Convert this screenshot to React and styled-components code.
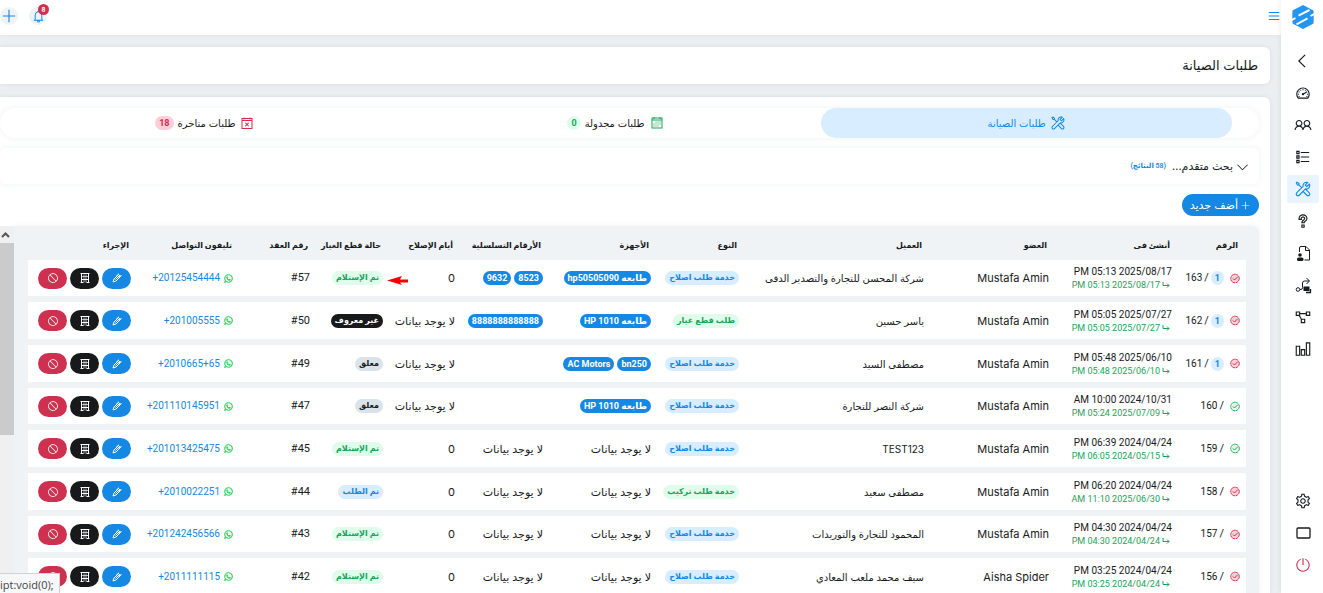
import React from "react";
import styled, { createGlobalStyle, css } from "styled-components";
import {
  LiaAngleLeftSolid, LiaAngleDownSolid, LiaTachometerAltSolid, LiaUserFriendsSolid, LiaListSolid,
  LiaToolsSolid, LiaQuestionSolid, LiaProjectDiagramSolid, LiaChartBarSolid, LiaCogSolid,
  LiaPowerOffSolid, LiaBell, LiaPlusSolid, LiaBarsSolid, LiaBanSolid,
  LiaWhatsapp, LiaCalendarAltSolid, LiaCalendarTimesSolid,
} from "react-icons/lia";

const c = {
  blue: "#1488e3", blueSoft: "#d8edff", green: "#1ba35a", greenSoft: "#e0fdec",
  red: "#ce304f", redSoft: "#ffcdd8", ink: "#17191b", page: "#ebeff2", table: "#eff3f6", grey: "#dbe3ea",
};

const numeric = `Roboto, "DejaVu Sans", sans-serif`;

const GlobalStyle = createGlobalStyle`
  * { box-sizing: border-box; }
  body { margin: 0; background: ${c.page}; color: ${c.ink}; font: 11px/16px Inter, "DejaVu Sans", sans-serif; }
  button { font: inherit; border: 0; padding: 0; cursor: pointer; }
  a { text-decoration: none; }
  svg { display: block; flex: none; }
`;

const Shell = styled.div`
  display: flex;
  height: 100vh;
  overflow: hidden;
`;

const Sidebar = styled.nav`
  flex: 0 0 42px;
  display: flex;
  flex-direction: column;
  align-items: center;
  gap: 4px;
  padding: 4px 0 14px 2px;
  background: #fff;
  box-shadow: 0 0 6px rgba(40, 60, 80, 0.1);
  z-index: 1;
`;

const Logo = styled.a`
  height: 39px;
`;

const SideLink = styled.a`
  display: grid;
  place-items: center;
  width: 32px;
  height: 28px;
  border-radius: 2px;
  font-size: 18px;
  color: ${(p) => (p.$danger ? c.red : p.$active ? c.blue : c.ink)};
  background: ${(p) => (p.$active ? "#e9f4fe" : "transparent")};
`;

const SideSpacer = styled.div`
  flex: 1;
`;

const Main = styled.main`
  flex: 1;
  min-width: 0;
  display: flex;
  flex-direction: column;
`;

const TopBar = styled.header`
  flex: none;
  display: flex;
  align-items: center;
  gap: 11px;
  height: 35px;
  padding: 0 0 3px 0;
  background: #fff;
  box-shadow: 0 0 4px rgba(40, 60, 80, 0.08);
`;

const MenuButton = styled.button`
  margin-inline-end: auto;
  background: none;
  color: ${c.blue};
  font-size: 14px;
`;

const RoundButton = styled.button`
  position: relative;
  display: grid;
  place-items: center;
  width: 18px;
  height: 18px;
  border-radius: 50%;
  background: ${c.table};
  color: ${c.blue};
  font-size: 15px;
`;

const Counter = styled.span`
  position: absolute;
  top: -3px;
  right: -2px;
  width: 11px;
  height: 11px;
  border-radius: 50%;
  background: ${c.red};
  color: #fff;
  font-size: 6px;
  line-height: 11px;
  font-weight: 700;
`;

const Body = styled.div`
  flex: 1;
  min-height: 0;
  display: flex;
  flex-direction: column;
  gap: 13px;
  padding: 12px 11px 0 0;
`;

const panel = css`
  background: #fff;
  border-radius: 0 6px 6px 0;
  box-shadow: 0 0 4px rgba(40, 60, 80, 0.1);
`;

const TitleCard = styled.section`
  ${panel}
  flex: none;
  height: 37px;
  padding: 0 12px;
`;

const Title = styled.h1`
  margin: 0;
  font-size: 13px;
  line-height: 37px;
  font-weight: 400;
`;

const Content = styled.section`
  ${panel}
  border-radius: 0 6px 0 0;
  flex: 1;
  min-height: 0;
  display: flex;
  flex-direction: column;
  gap: 10px;
  padding: 11px 11px 0 0;
`;

const Tabs = styled.div`
  flex: none;
  display: flex;
  height: 30px;
  padding-inline-start: 27px;
  border-radius: 15px;
  box-shadow: 0 0 6px rgba(40, 60, 80, 0.08);
`;

const Tab = styled.button`
  flex: 1;
  display: flex;
  align-items: center;
  justify-content: center;
  gap: 4px;
  border-radius: 15px;
  font-size: 10px;
  background: ${(p) => (p.$active ? c.blueSoft : "transparent")};
  color: ${(p) => (p.$active ? c.blue : c.ink)};
`;

const TabIcon = styled.span`
  font-size: 16px;
  color: ${(p) => p.$color};
`;

const Search = styled.button`
  flex: none;
  display: flex;
  align-items: center;
  gap: 3px;
  height: 36px;
  padding: 0 10px;
  border-radius: 6px;
  background: #fff;
  color: ${c.ink};
  font-size: 11px;
  box-shadow: 0 0 6px rgba(40, 60, 80, 0.08);
`;

const Results = styled.small`
  margin-inline-start: 3px;
  font: 600 7px/16px ${numeric};
  color: ${c.blue};
`;

const AddButton = styled.button`
  flex: none;
  align-self: flex-start;
  display: flex;
  align-items: center;
  gap: 2px;
  height: 22px;
  padding: 0 8px;
  border-radius: 11px;
  background: ${c.blue};
  color: #fff;
  font-size: 11px;
`;

const Scroller = styled.div`
  flex: 1;
  min-height: 0;
  display: flex;
`;

const TableArea = styled.div`
  flex: 1;
  min-width: 0;
  overflow: hidden;
  padding: 0 13px 0 14px;
  background: ${c.table};
  border-radius: 0 6px 0 0;
  box-shadow: 0 0 6px rgba(40, 60, 80, 0.08);
`;

const ScrollTrack = styled.div`
  flex: 0 0 14px;
  background: #f0f0f0;
`;

const ScrollArrow = styled.div`
  display: grid;
  place-items: center;
  height: 17px;
  padding-right: 4px;
`;

const ScrollThumb = styled.div`
  height: 192px;
  background: #cbcbcb;
`;

const Table = styled.table`
  width: 100%;
  table-layout: fixed;
  border-collapse: separate;
  border-spacing: 0 6px;
  margin-top: -6px;
`;

const Th = styled.th`
  padding: 10px 8px 0 0;
  text-align: start;
  white-space: nowrap;
  font-size: 8px;
  line-height: 12px;
  font-weight: 700;
`;

const HeadRow = styled.tr`
  height: 28px;
`;

const Row = styled.tr`
  height: 37px;
  background: #fff;
  &:nth-child(3n + 1) { height: 36px; }
`;

const Td = styled.td`
  position: relative;
  padding: 0 6px 0 0;
  white-space: nowrap;
`;

const ClientTd = styled(Td)`
  font-size: 10px;
`;

const NumberTd = styled(Td)`
  font-family: ${numeric};
`;

const Line = styled.div`
  display: flex;
  align-items: center;
  gap: ${(p) => p.$gap || 3}px;
`;

const tones = {
  solid: ["#fff", c.blue], info: [c.blue, c.blueSoft], ok: [c.green, c.greenSoft],
  dark: ["#fff", c.ink], muted: [c.ink, c.grey], bad: [c.red, c.redSoft],
};

const Badge = styled.span`
  display: inline-block;
  min-width: 13px;
  height: 14px;
  padding: 0 4px;
  border-radius: 7px;
  text-align: center;
  font: 700 ${(p) => p.$size || 8}px/14px ${numeric};
  color: ${(p) => tones[p.$tone][0]};
  background: ${(p) => tones[p.$tone][1]};
`;

const Stamp = styled.div`
  font-size: 10px;
  line-height: 14px;
`;

const Updated = styled.div`
  display: flex;
  align-items: center;
  gap: 2px;
  padding-right: 2px;
  font-size: 9px;
  line-height: 12px;
  color: ${c.green};
`;

const RequestId = styled.span`
  font-size: 10px;
`;

const Phone = styled.a`
  direction: ltr;
  font-size: 10px;
  color: ${c.blue};
`;

const Ltr = styled.bdi`
  direction: ltr;
`;

const WhatsApp = styled.span`
  color: #25c950;
  font-size: 11px;
  svg { stroke-width: 1px; }
`;

const Action = styled.button`
  display: grid;
  place-items: center;
  width: 29px;
  height: 21px;
  border-radius: 11px;
  color: #fff;
  font-size: 12px;
  background: ${(p) => p.$bg};
`;

const Pointer = styled.svg`
  position: absolute;
  top: 15px;
  right: -20px;
  z-index: 1;
`;

const StatusHint = styled.div`
  position: fixed;
  left: 0;
  bottom: 0;
  z-index: 2;
  width: 60px;
  height: 20px;
  overflow: hidden;
  direction: ltr;
  border: solid #d2d2d2;
  border-width: 1px 1px 0 0;
  background: #f7f8f9;
  color: #444;
  font: 11px/21px "Open Sans", sans-serif;
`;

const LogoMark = () => (
  <svg width="24" height="26" viewBox="0 0 24 26">
    <path d="M2 8v10M22 8v10" stroke="#ffc999" strokeWidth="2" />
    <path fill="#2196f3" d="M12 1 22.500 6.500v13L12 25 1.500 19.500v-13z" />
    <path d="M18.500 6 7.500 11.700M5.500 20.300 16.500 14.300M24 9.500 19.500 12M0 16.500 4.500 14" stroke="#fff" strokeWidth="2" />
  </svg>
);

const FilePerson = () => (
  <svg width="15" height="17" viewBox="0 0 15 17" fill="none" stroke="currentColor">
    <path d="M3.500 7V3q0-1.500 1.500-1.500h5l3.500 3.500v10H8.500M9.500 1.500v4h4" />
    <circle cx="4" cy="10" r="1.800" fill="currentColor" stroke="none" />
    <rect x="1" y="12.500" width="6.500" height="3.500" rx="1.500" fill="currentColor" stroke="none" />
  </svg>
);

const RouteIcon = () => (
  <svg width="17" height="17" viewBox="0 0 17 17" fill="none" stroke="currentColor">
    <circle cx="3" cy="12.500" r="1.800" />
    <path d="M5 12.500h1q1.500 0 1.500-2V6q0-2 2-2h4.500M11.500 1l3 3-3 3" />
    <rect x="9" y="10" width="5" height="3.500" fill="currentColor" />
    <path d="M11 15.500h4.500v-3.500" strokeWidth="1.300" />
  </svg>
);

const ScreenIcon = () => (
  <svg width="15" height="12" viewBox="0 0 15 12" fill="none" stroke="currentColor" strokeWidth="1.300">
    <rect x="1" y="1" width="13" height="10" rx="1" />
  </svg>
);

const EditIcon = () => (
  <svg width="10" height="10" viewBox="0 0 10 10" fill="none" stroke="currentColor">
    <path d="M1 9l1-3 4.500-4.500 2 2L4 8z" />
    <path d="M4 3.500 7 .7M6 4l3.500-1.500M3.500 6.500 7 3" />
  </svg>
);

const BuildingIcon = () => (
  <svg width="10" height="10" viewBox="0 0 10 10" fill="none" stroke="currentColor">
    <path d="M.5 .5h9M1.500 1v9M8.500 1v9M.5 9.500h3M6.500 9.500h3M2 6.500h6" />
    <path d="M4 1.500v8M6 1.500v8M2 3.500h6" strokeOpacity=".65" />
  </svg>
);

const CheckSeal = ({ tone }) => (
  <svg width="10" height="11" viewBox="0 0 10 11" fill={tones[tone][1]} stroke={tones[tone][0]}>
    <circle cx="5" cy="5.500" r="4.300" strokeDasharray="2.500 .5" />
    <path d="m3 5.500 1.500 1.500 3.300-3.300" fill="none" />
  </svg>
);

const TurnArrow = () => (
  <svg width="8" height="8" viewBox="0 0 8 8" fill="none" stroke="currentColor">
    <path d="M1 1v3.500h6M5 2.500l2 2-2 2" />
  </svg>
);

const none = "لا يوجد بيانات";
const repair = ["خدمة طلب اصلاح", "info"];
const received = ["تم الإستلام", "ok"];
const rows = [
  { id: 163, tone: "bad", n: 1, at: "2025/08/17 05:13 PM", up: "2025/08/17 05:13 PM", by: "Mustafa Amin", client: "شركة المحسن للتجارة والتصدير الدقى", type: repair, devices: ["طابعه hp50505090"], serials: ["8523", "9632"], days: "0", state: received, contract: "#57", phone: "+20125454444", pointer: true },
  { id: 162, tone: "bad", n: 1, at: "2025/07/27 05:05 PM", up: "2025/07/27 05:05 PM", by: "Mustafa Amin", client: "ياسر حسين", type: ["طلب قطع غيار", "ok"], devices: ["طابعه HP 1010"], serials: ["8888888888888"], days: none, state: ["غير معروف", "dark"], contract: "#50", phone: "+201005555" },
  { id: 161, tone: "bad", n: 1, at: "2025/06/10 05:48 PM", up: "2025/06/10 05:48 PM", by: "Mustafa Amin", client: "مصطفى السيد", type: repair, devices: ["bn250", "AC Motors"], serials: [], days: none, state: ["معلق", "muted"], contract: "#49", phone: "+2010665+65" },
  { id: 160, tone: "ok", at: "2024/10/31 10:00 AM", up: "2025/07/09 05:24 PM", by: "Mustafa Amin", client: "شركة النصر للتجارة", type: repair, devices: ["طابعه HP 1010"], serials: [], days: none, state: ["معلق", "muted"], contract: "#47", phone: "+201110145951" },
  { id: 159, tone: "ok", at: "2024/04/24 06:39 PM", up: "2024/05/15 06:05 PM", by: "Mustafa Amin", client: "TEST123", type: repair, days: "0", state: received, contract: "#45", phone: "+201013425475" },
  { id: 158, tone: "bad", at: "2024/04/24 06:20 PM", up: "2025/06/30 11:10 AM", by: "Mustafa Amin", client: "مصطفى سعيد", type: ["خدمة طلب تركيب", "ok"], days: "0", state: ["تم الطلب", "info"], contract: "#44", phone: "+2010022251" },
  { id: 157, tone: "bad", at: "2024/04/24 04:30 PM", up: "2024/04/24 04:30 PM", by: "Mustafa Amin", client: "المحمود للتجارة والتوريدات", type: repair, days: "0", state: received, contract: "#43", phone: "+201242456566" },
  { id: 156, tone: "bad", at: "2024/04/24 03:25 PM", up: "2024/04/24 03:25 PM", by: "Aisha Spider", client: "سيف محمد ملعب المعادي", type: repair, days: "0", state: received, contract: "#42", phone: "+2011111115" },
];

const columns = [
  ["الرقم", 68], ["أنشئ فى", 123], ["العضو", 125], ["العميل", 185], ["النوع", 88], ["الأجهزة", 108],
  ["الأرقام التسلسلية", 88], ["أيام الإصلاح", 72], ["حالة قطع الغيار", 73], ["رقم العقد", 76],
  ["تليفون التواصل", 103], ["الإجراء", 109],
];

const sideLinks = [
  ["رجوع", LiaAngleLeftSolid], ["لوحة التحكم", LiaTachometerAltSolid], ["العملاء", LiaUserFriendsSolid],
  ["القوائم", LiaListSolid], ["طلبات الصيانة", LiaToolsSolid, true], ["المساعدة", LiaQuestionSolid],
  ["الملفات", FilePerson], ["المسارات", RouteIcon], ["الهيكل", LiaProjectDiagramSolid], ["التقارير", LiaChartBarSolid],
];

const Badges = ({ items }) =>
  items ? <Line>{items.map((t) => <Badge key={t} $tone="solid" $size={9}>{t}</Badge>)}</Line> : none;

const RequestRow = ({ r }) => (
  <Row>
    <NumberTd>
      <Line $gap={6}>
        <CheckSeal tone={r.tone} />
        <Line $gap={2}>
          {r.n && <Badge $tone="info" $size={9}>{r.n}</Badge>}
          <span>/</span>
          <RequestId>{r.id}</RequestId>
        </Line>
      </Line>
    </NumberTd>
    <NumberTd>
      <Stamp>{r.at}</Stamp>
      <Updated><TurnArrow /><span>{r.up}</span></Updated>
    </NumberTd>
    <Td>{r.by}</Td>
    <ClientTd>{r.client}</ClientTd>
    <Td><Line><Badge $tone={r.type[1]}>{r.type[0]}</Badge></Line></Td>
    <Td><Badges items={r.devices} /></Td>
    <Td><Badges items={r.serials} /></Td>
    <Td>{r.days}</Td>
    <Td>
      <Line><Badge $tone={r.state[1]}>{r.state[0]}</Badge></Line>
      {r.pointer && (
        <Pointer width="22" height="11" viewBox="0 0 22 11" fill="#f40000">
          <path d="M0 5.500 15 1l-2 3.500h8v3h-8L15 10z" />
        </Pointer>
      )}
    </Td>
    <NumberTd><Ltr>{r.contract}</Ltr></NumberTd>
    <NumberTd>
      <Line>
        <WhatsApp><LiaWhatsapp /></WhatsApp>
        <Phone href={`tel:${r.phone}`}>{r.phone}</Phone>
      </Line>
    </NumberTd>
    <Td>
      <Line>
        <Action $bg={c.blue} aria-label="تعديل"><EditIcon /></Action>
        <Action $bg={c.ink} aria-label="الفرع"><BuildingIcon /></Action>
        <Action $bg={c.red} aria-label="إلغاء"><LiaBanSolid /></Action>
      </Line>
    </Td>
  </Row>
);

export default function App() {
  return (
    <Shell dir="rtl" lang="ar">
      <GlobalStyle />
      <Sidebar>
        <Logo href="#" aria-label="الرئيسية"><LogoMark /></Logo>
        {sideLinks.map(([label, Icon, active]) => (
          <SideLink key={label} href="#" aria-label={label} $active={active}><Icon /></SideLink>
        ))}
        <SideSpacer />
        <SideLink href="#" aria-label="الإعدادات"><LiaCogSolid /></SideLink>
        <SideLink href="#" aria-label="الشاشة"><ScreenIcon /></SideLink>
        <SideLink href="#" aria-label="خروج" $danger><LiaPowerOffSolid /></SideLink>
      </Sidebar>
      <Main>
        <TopBar>
          <MenuButton aria-label="القائمة"><LiaBarsSolid /></MenuButton>
          <RoundButton aria-label="الإشعارات"><LiaBell /><Counter>8</Counter></RoundButton>
          <RoundButton aria-label="إضافة"><LiaPlusSolid size={18} /></RoundButton>
        </TopBar>
        <Body>
          <TitleCard><Title>طلبات الصيانة</Title></TitleCard>
          <Content>
            <Tabs role="tablist">
              <Tab role="tab" aria-selected="true" $active>
                <TabIcon $color={c.blue}><LiaToolsSolid /></TabIcon>طلبات الصيانة
              </Tab>
              <Tab role="tab" aria-selected="false">
                <TabIcon $color={c.green}><LiaCalendarAltSolid /></TabIcon>طلبات مجدولة
                <Badge $tone="ok" $size={9}>0</Badge>
              </Tab>
              <Tab role="tab" aria-selected="false">
                <TabIcon $color={c.red}><LiaCalendarTimesSolid /></TabIcon>طلبات متاخرة
                <Badge $tone="bad" $size={9}>18</Badge>
              </Tab>
            </Tabs>
            <Search aria-expanded="false">
              <LiaAngleDownSolid size={13} />
              <span>بحث متقدم...</span>
              <Results>(58 النتائج)</Results>
            </Search>
            <AddButton><LiaPlusSolid />أضف جديد</AddButton>
            <Scroller>
              <TableArea>
                <Table>
                  <colgroup>
                    {columns.map(([name, w]) => <col key={name} width={w} />)}
                  </colgroup>
                  <thead>
                    <HeadRow>{columns.map(([name]) => <Th key={name} scope="col">{name}</Th>)}</HeadRow>
                  </thead>
                  <tbody>{rows.map((r) => <RequestRow key={r.id} r={r} />)}</tbody>
                </Table>
              </TableArea>
              <ScrollTrack aria-hidden="true">
                <ScrollArrow>
                  <svg width="9" height="6" viewBox="0 0 9 6" fill="none" stroke="#555" strokeWidth="2">
                    <path d="M1 5l3.500-3.500L8 5" />
                  </svg>
                </ScrollArrow>
                <ScrollThumb />
              </ScrollTrack>
            </Scroller>
          </Content>
        </Body>
      </Main>
      <StatusHint>ipt:void(0);</StatusHint>
    </Shell>
  );
}
